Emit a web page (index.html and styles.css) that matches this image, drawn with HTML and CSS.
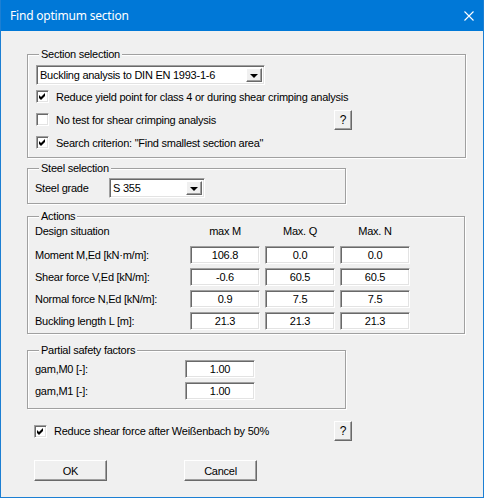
FILE: index.html
```html
<!DOCTYPE html>
<html lang="en">
<head>
    <meta charset="UTF-8">
    <title>Find optimum section</title>
    <link rel="stylesheet" href="styles.css">
</head>
<body>
    <div class="window">
        <div class="titlebar">
            <span class="title">Find optimum section</span>
            <svg class="close" width="10" height="10" viewBox="0 0 10 10">
                <path d="M0.5 0.5 L9.5 9.5 M9.5 0.5 L0.5 9.5" stroke="#fff" stroke-width="1.1" fill="none"/>
            </svg>
        </div>
        <div class="content">
            <!-- Section selection -->
            <div class="group group-section">
                <div class="group-title">Section selection</div>
                <div class="select select-wide">
                    <span class="select-text">Buckling analysis to DIN EN 1993-1-6</span>
                    <span class="select-btn"><i></i></span>
                </div>
                <div class="check-row">
                    <span class="check on"></span>
                    <span>Reduce yield point for class 4 or during shear crimping analysis</span>
                </div>
                <div class="check-row">
                    <div class="check-cell">
                        <span class="check"></span>
                        <span>No test for shear crimping analysis</span>
                    </div>
                    <span class="button help">?</span>
                </div>
                <div class="check-row">
                    <span class="check on"></span>
                    <span>Search criterion: "Find smallest section area"</span>
                </div>
            </div>

            <!-- Steel selection -->
            <div class="group group-steel">
                <div class="group-title">Steel selection</div>
                <div class="steel-row">
                    <span class="steel-label">Steel grade</span>
                    <div class="select select-steel">
                        <span class="select-text">S 355</span>
                        <span class="select-btn"><i></i></span>
                    </div>
                </div>
            </div>

            <!-- Actions -->
            <div class="group group-actions">
                <div class="group-title">Actions</div>
                <div class="actions-grid">
                    <span class="cell-label head">Design situation</span>
                    <span class="col-head">max M</span>
                    <span class="col-head">Max. Q</span>
                    <span class="col-head">Max. N</span>

                    <span class="cell-label">Moment M,Ed [kN·m/m]:</span>
                    <span class="field">106.8</span>
                    <span class="field">0.0</span>
                    <span class="field">0.0</span>

                    <span class="cell-label">Shear force V,Ed [kN/m]:</span>
                    <span class="field">-0.6</span>
                    <span class="field">60.5</span>
                    <span class="field">60.5</span>

                    <span class="cell-label">Normal force N,Ed [kN/m]:</span>
                    <span class="field">0.9</span>
                    <span class="field">7.5</span>
                    <span class="field">7.5</span>

                    <span class="cell-label">Buckling length L [m]:</span>
                    <span class="field">21.3</span>
                    <span class="field">21.3</span>
                    <span class="field">21.3</span>
                </div>
            </div>

            <!-- Partial safety factors -->
            <div class="group group-partial">
                <div class="group-title">Partial safety factors</div>
                <div class="partial-grid">
                    <span class="cell-label">gam,M0 [-]:</span>
                    <span class="field">1.00</span>
                    <span class="cell-label">gam,M1 [-]:</span>
                    <span class="field">1.00</span>
                </div>
            </div>

            <div class="check-row bottom-check">
                <div class="check-cell">
                    <span class="check on"></span>
                    <span>Reduce shear force after Weißenbach by 50%</span>
                </div>
                <span class="button help">?</span>
            </div>

            <div class="buttons">
                <span class="button push">OK</span>
                <span class="button push">Cancel</span>
            </div>
        </div>
    </div>
</body>
</html>
```

FILE: styles.css
```css
* {
    box-sizing: border-box;
}

html,
body {
    margin: 0;
    padding: 0;
    overflow: hidden;
}

body {
    font-family: "Liberation Sans", Arial, sans-serif;
    font-size: 11px;
    letter-spacing: -0.25px;
    color: #000;
    background: #f0f0f0;
}

.window {
    width: 484px;
    height: 498px;
    border: 1px solid #1c7fd3;
    border-top: 0;
    background: #f0f0f0;
}

.titlebar {
    height: 31px;
    background: #0078d7;
    color: #fff;
    display: flex;
    align-items: center;
    justify-content: space-between;
    padding: 0 9px 0 9px;
}

.title {
    font-family: "Noto Sans", "Open Sans", sans-serif;
    font-size: 12px;
    letter-spacing: -0.2px;
}

.content {
    padding-left: 26px;
}

/* group boxes */
.group {
    border: 1px solid #a0a0a0;
    box-shadow: 1px 1px 0 #fff, inset 1px 1px 0 #fff;
    padding: 0 7px 0 7px;
}

.group-title {
    display: table;
    margin: -8px 0 0 4px;
    padding: 0 2px;
    line-height: 14px;
    background: #f0f0f0;
}

.group-section {
    width: 439px;
    margin-top: 23px;
    padding-left: 8px;
    padding-bottom: 3px;
}

.group-section .group-title {
    margin-left: 3px;
}

.group-section .check-row {
    height: 23px;
}

.group-steel {
    width: 319px;
    margin-top: 10px;
    padding-bottom: 5px;
}

.group-actions {
    width: 438px;
    margin-top: 12px;
    padding-bottom: 3px;
}

.group-partial {
    width: 319px;
    margin-top: 16px;
    padding-bottom: 8px;
}

/* dropdowns */
.select {
    display: flex;
    height: 20px;
    background: #fff;
    border: 1px solid;
    border-color: #a0a0a0 #fff #fff #a0a0a0;
    box-shadow: inset 1px 1px 0 #696969, inset -1px -1px 0 #e3e3e3;
    padding: 2px 2px 2px 2px;
}

.select-wide {
    width: 229px;
    margin-top: 4px;
}

.select-steel {
    width: 96px;
}

.select-text {
    flex: 1;
    line-height: 14px;
    padding-left: 1px;
}

.select-btn {
    width: 16px;
    height: 14px;
    background: #f0f0f0;
    border: 1px solid;
    border-color: #fff #696969 #696969 #fff;
    box-shadow: inset -1px -1px 0 #a0a0a0;
    display: flex;
    align-items: center;
    justify-content: center;
}

.select-btn i {
    width: 0;
    height: 0;
    border-left: 4px solid transparent;
    border-right: 4px solid transparent;
    border-top: 4px solid #000;
    margin-top: 1px;
}

/* checkboxes */
.check-row {
    display: flex;
    align-items: center;
    height: 22px;
}

.check-cell {
    display: flex;
    align-items: center;
    width: 298px;
}

.check {
    width: 13px;
    height: 13px;
    margin-right: 7px;
    background: #fff;
    border: 1px solid;
    border-color: #a0a0a0 #fff #fff #a0a0a0;
    box-shadow: inset 1px 1px 0 #696969, inset -1px -1px 0 #e3e3e3;
    flex: none;
}

.check.on {
    background: #fff url("data:image/svg+xml,%3Csvg xmlns='http://www.w3.org/2000/svg' width='11' height='11'%3E%3Cpath d='M2 4 L4 6 L8 2 L8 5 L4 9 L2 7 Z' fill='%23000'/%3E%3C/svg%3E") no-repeat 0 0;
}

/* buttons */
.button {
    display: flex;
    align-items: center;
    justify-content: center;
    background: #f0f0f0;
    border: 1px solid;
    border-color: #fff #696969 #696969 #fff;
    box-shadow: inset -1px -1px 0 #a0a0a0;
}

.help {
    width: 18px;
    height: 20px;
    font-size: 12px;
}

.bottom-check {
    margin-top: 12px;
    height: 20px;
    padding-left: 7px;
}

.bottom-check .check-cell {
    width: 300px;
}

.buttons {
    display: flex;
    gap: 77px;
    margin-top: 19px;
    padding-left: 7px;
}

.push {
    width: 73px;
    height: 21px;
}

/* steel */
.steel-row {
    display: flex;
    align-items: center;
    margin-top: 3px;
}

.steel-label {
    width: 74px;
}

/* grids */
.actions-grid {
    display: grid;
    grid-template-columns: 150px 70px 70px 70px;
    grid-template-rows: 19px repeat(4, 18px);
    column-gap: 5px;
    row-gap: 4px;
}

.partial-grid {
    display: grid;
    grid-template-columns: 150px 70px;
    grid-auto-rows: 18px;
    row-gap: 4px;
    margin-top: 3px;
}

.cell-label {
    align-self: center;
}

.cell-label.head,
.col-head {
    align-self: start;
    line-height: 16px;
}

.col-head {
    text-align: center;
}

.field {
    background: #fff;
    border: 1px solid;
    border-color: #a0a0a0 #fff #fff #a0a0a0;
    box-shadow: inset 1px 1px 0 #696969, inset -1px -1px 0 #e3e3e3;
    text-align: center;
    line-height: 16px;
}
```
